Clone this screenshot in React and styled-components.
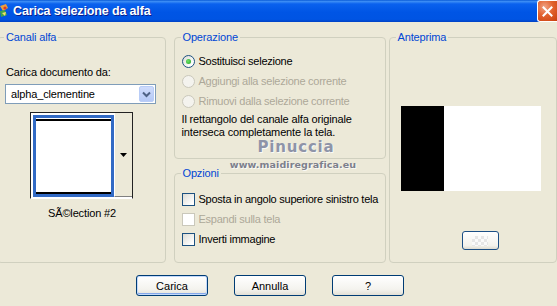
import React from 'react';
import styled, { createGlobalStyle } from 'styled-components';

const GlobalStyle = createGlobalStyle`
  html, body {
    margin: 0;
    padding: 0;
    background: #ece9d8;
  }
  body {
    font-family: 'Liberation Sans', Arial, sans-serif;
    font-size: 11px;
    letter-spacing: -0.15px;
    color: #000;
  }
`;

const Window = styled.div`
  position: relative;
  width: 557px;
  height: 306px;
  overflow: hidden;
  background: #ece9d8;
`;

const TitleBar = styled.div`
  display: flex;
  align-items: center;
  height: 22px;
  background: linear-gradient(
    to bottom,
    #0a5bd6 0%,
    #3b8cf5 7%,
    #0a61ee 18%,
    #0055e5 55%,
    #0054e3 88%,
    #0041c4 100%
  );
`;

const TitleIcon = styled.svg`
  width: 9px;
  height: 16px;
  flex-shrink: 0;
`;

const TitleText = styled.span`
  margin-left: 4px;
  color: #fff;
  font-family: 'Liberation Sans', Arial, sans-serif;
  font-weight: bold;
  font-size: 12.5px;
  letter-spacing: -0.15px;
  text-shadow: 1px 1px 0 #0a1e8c;
`;

const CloseButton = styled.div`
  margin-left: auto;
  width: 19px;
  height: 20px;
  display: flex;
  align-items: center;
  justify-content: center;
  border: 1px solid #fff;
  border-right: none;
  border-radius: 3px 0 0 3px;
  background: radial-gradient(circle at 35% 30%, #f0a486 0%, #e2622f 45%, #c9400f 100%);
`;

const Body = styled.div`
  display: flex;
  flex-direction: column;
  padding-top: 9px;
`;

const Panels = styled.div`
  display: flex;
  height: 232px;
  margin-left: -3px;
`;

const Group = styled.fieldset`
  box-sizing: border-box;
  margin: 0;
  margin-left: ${(p) => p.$ml || 0}px;
  padding: 0;
  min-width: 0;
  width: ${(p) => p.$w}px;
  height: ${(p) => (p.$h ? `${p.$h}px` : 'auto')};
  flex: ${(p) => (p.$h ? 'none' : '1')};
  border: 1px solid #d0d0bf;
  border-radius: 4px;
  display: flex;
  flex-direction: column;
`;

const Legend = styled.legend`
  margin-left: 6px;
  padding: 0 2px;
  line-height: 13px;
  color: #0046d5;
`;

const LeftContent = styled.div`
  display: flex;
  flex-direction: column;
  align-items: flex-start;
  padding: 22px 0 0 7px;
`;

const Label = styled.div`
  line-height: 13px;
  padding-left: 1px;
`;

const Select = styled.div`
  box-sizing: border-box;
  display: flex;
  align-items: center;
  width: 151px;
  height: 20px;
  margin-top: 5px;
  padding-left: 5px;
  border: 1px solid #7f9db9;
  background: #fff;
  line-height: 13px;
`;

const SelectButton = styled.span`
  margin-left: auto;
  margin-right: 1px;
  width: 15px;
  height: 16px;
  border-radius: 2px;
  display: flex;
  align-items: center;
  justify-content: center;
  background: linear-gradient(to bottom, #cfdcfc, #b5c9f6);
  border: 1px solid #b9cdf7;
  box-sizing: border-box;
`;

const Thumb = styled.div`
  box-sizing: border-box;
  display: flex;
  width: 103px;
  height: 87px;
  margin: 8px 0 0 25px;
  padding: 2px 0 1px 2px;
  border: 1px solid #222;
  border-bottom-color: #fff;
  background: #fff;
`;

const Swatch = styled.div`
  display: flex;
  width: 81px;
  box-sizing: border-box;
  border: 3px solid #316ac5;
  background: #fff;
`;

const SwatchImage = styled.div`
  flex: 1;
  border-top: 2px solid #000;
  border-bottom: 2px solid #000;
  margin-top: 1px;
`;

const ThumbDrop = styled.div`
  flex: 1;
  display: flex;
  align-items: center;
  justify-content: center;
  margin-top: -2px;
  background: #ece9d8;
  border-left: 1px solid #fff;
  border-bottom: 1px solid #808080;
`;

const Caption = styled.div`
  margin-top: 8px;
  padding-left: 13px;
  text-align: center;
  width: 128px;
  line-height: 13px;
`;

const MidCol = styled.div`
  display: flex;
  flex-direction: column;
  gap: 8px;
  margin-left: 8px;
`;

const OptionList = styled.div`
  display: flex;
  flex-direction: column;
  padding: ${(p) => p.$top}px 0 0 7px;
`;

const OptionRow = styled.div`
  display: flex;
  align-items: center;
  gap: 4px;
  height: 20px;
  letter-spacing: -0.25px;
  color: ${(p) => (p.$disabled ? '#aca899' : '#000')};
  white-space: nowrap;
`;

const Radio = styled.span`
  box-sizing: border-box;
  width: 13px;
  height: 13px;
  border-radius: 50%;
  flex-shrink: 0;
  display: flex;
  align-items: center;
  justify-content: center;
  border: 1px solid ${(p) => (p.$disabled ? '#cac8bb' : '#1c5180')};
  background: ${(p) =>
    p.$disabled ? '#f4f3ee' : 'linear-gradient(135deg, #dcdcd5 0%, #ffffff 80%)'};

  &::after {
    content: '';
    width: 5px;
    height: 5px;
    border-radius: 50%;
    background: ${(p) =>
      p.$checked ? 'radial-gradient(circle at 40% 40%, #6ee46a, #21a121)' : 'transparent'};
  }
`;

const Check = styled.span`
  box-sizing: border-box;
  width: 13px;
  height: 13px;
  flex-shrink: 0;
  border: 1px solid ${(p) => (p.$disabled ? '#cac8bb' : '#1c5180')};
  background: ${(p) =>
    p.$disabled ? '#fff' : 'linear-gradient(135deg, #dcdcd5 0%, #ffffff 85%)'};
`;

const Info = styled.div`
  margin-top: 2px;
  line-height: 13px;
`;

const RightGroupBody = styled.div`
  display: flex;
  flex-direction: column;
  align-items: flex-start;
  padding: 62px 0 0 11px;
`;

const Preview = styled.div`
  display: flex;
  width: 140px;
  height: 85px;
  background: #fff;
`;

const PreviewMask = styled.div`
  width: 43px;
  background: #000;
`;

const SmallButton = styled.div`
  box-sizing: border-box;
  width: 37px;
  height: 19px;
  margin: 40px 0 0 61px;
  border: 1px solid #1c4f85;
  border-radius: 3px;
  display: flex;
  align-items: center;
  justify-content: center;
  background: linear-gradient(to bottom, #ffffff, #f3f2ec 80%, #dedbd0);
`;

const Checker = styled.span`
  width: 16px;
  height: 10px;
  background: repeating-conic-gradient(#e6e6e6 0 25%, #fafafa 0 50%) 0 0 / 6px 6px;
`;

const ButtonRow = styled.div`
  display: flex;
  gap: 26px;
  margin-top: 12px;
  padding-left: 136px;
`;

const Button = styled.button`
  box-sizing: border-box;
  width: 72px;
  height: 21px;
  padding: 0;
  font-family: 'Liberation Sans', Arial, sans-serif;
  font-size: 11px;
  color: #000;
  border: 1px solid #003c74;
  border-radius: 3px;
  background: linear-gradient(to bottom, #ffffff 0%, #f4f3ee 70%, #e3e0d6 100%);
  box-shadow: ${(p) =>
    p.$default ? 'inset 0 0 0 1px #c3d9fb, inset 0 -1px 0 1px #85a8ea' : 'none'};
`;

const Watermark = styled.div`
  position: absolute;
  left: 232px;
  top: 138px;
  display: flex;
  flex-direction: column;
  align-items: center;
  width: 122px;
  pointer-events: none;
`;

const WatermarkName = styled.span`
  margin-left: 6px;
  font-family: 'DejaVu Sans', sans-serif;
  font-weight: bold;
  font-size: 15px;
  letter-spacing: 0.8px;
  line-height: 19px;
  color: #8e94a8;
  text-shadow: 1px 1px 0 #fafaf6;
`;

const WatermarkSite = styled.span`
  margin-top: 2px;
  font-family: 'DejaVu Sans', sans-serif;
  font-weight: bold;
  font-size: 9.5px;
  letter-spacing: 0.1px;
  line-height: 11px;
  color: #7d808c;
  text-shadow: 1px 1px 0 #fafaf6;
`;

const radios = [
  { label: 'Sostituisci selezione', checked: true },
  { label: 'Aggiungi alla selezione corrente', disabled: true },
  { label: 'Rimuovi dalla selezione corrente', disabled: true },
];

const checks = [
  { label: 'Sposta in angolo superiore sinistro tela' },
  { label: 'Espandi sulla tela', disabled: true },
  { label: 'Inverti immagine' },
];

const App = () => {
  return (
    <Window>
      <GlobalStyle />
      <TitleBar>
        <TitleIcon viewBox="0 0 9 16">
          <path d="M0 3 L6 1 L8 5 L3 8 Z" fill="#e8a040" />
          <path d="M0 8 L5 7 L7 12 L1 14 Z" fill="#3fa34d" />
          <circle cx="5" cy="5" r="1.6" fill="#d83a2a" />
          <path d="M2 10 L6 9 L5 13 Z" fill="#f4e36a" />
        </TitleIcon>
        <TitleText>Carica selezione da alfa</TitleText>
        <CloseButton>
          <svg width="11" height="11" viewBox="0 0 11 11">
            <path d="M1.5 1.5 L9.5 9.5 M9.5 1.5 L1.5 9.5" stroke="#fff" strokeWidth="2" strokeLinecap="square" />
          </svg>
        </CloseButton>
      </TitleBar>
      <Body>
        <Panels>
          <Group $w={167}>
            <Legend>Canali alfa</Legend>
            <LeftContent>
              <Label>Carica documento da:</Label>
              <Select>
                alpha_clementine
                <SelectButton>
                  <svg width="9" height="7" viewBox="0 0 9 7">
                    <path d="M1 1.5 L4.5 5 L8 1.5" fill="none" stroke="#4d6185" strokeWidth="2" />
                  </svg>
                </SelectButton>
              </Select>
              <Thumb>
                <Swatch>
                  <SwatchImage />
                </Swatch>
                <ThumbDrop>
                  <svg width="7" height="4" viewBox="0 0 7 4">
                    <path d="M0 0 H7 L3.5 4 Z" fill="#000" />
                  </svg>
                </ThumbDrop>
              </Thumb>
              <Caption>SÃ©lection #2</Caption>
            </LeftContent>
          </Group>
          <MidCol>
            <Group $w={212} $h={128}>
              <Legend>Operazione</Legend>
              <OptionList $top={7}>
                {radios.map((r) => (
                  <OptionRow key={r.label} $disabled={r.disabled}>
                    <Radio $checked={r.checked} $disabled={r.disabled} />
                    {r.label}
                  </OptionRow>
                ))}
                <Info>
                  Il rettangolo del canale alfa originale
                  <br />
                  interseca completamente la tela.
                </Info>
              </OptionList>
            </Group>
            <Group $w={212}>
              <Legend>Opzioni</Legend>
              <OptionList $top={9}>
                {checks.map((c) => (
                  <OptionRow key={c.label} $disabled={c.disabled}>
                    <Check $disabled={c.disabled} />
                    {c.label}
                  </OptionRow>
                ))}
              </OptionList>
            </Group>
          </MidCol>
          <Group $w={166} $ml={3}>
            <Legend>Anteprima</Legend>
            <RightGroupBody>
              <Preview>
                <PreviewMask />
              </Preview>
              <SmallButton>
                <Checker />
              </SmallButton>
            </RightGroupBody>
          </Group>
        </Panels>
        <ButtonRow>
          <Button $default>Carica</Button>
          <Button>Annulla</Button>
          <Button>?</Button>
        </ButtonRow>
      </Body>
      <Watermark>
        <WatermarkName>Pinuccia</WatermarkName>
        <WatermarkSite>www.maidiregrafica.eu</WatermarkSite>
      </Watermark>
    </Window>
  );
};

export default App;
